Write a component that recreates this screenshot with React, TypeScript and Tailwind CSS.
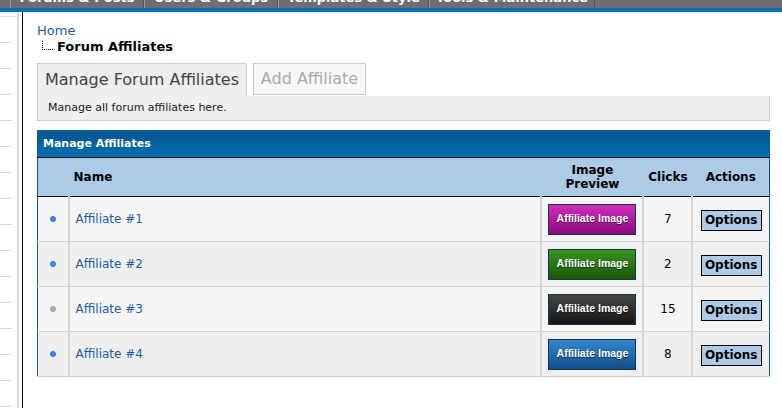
import React from "react";

const tabs = ["Forums & Posts", "Users & Groups", "Templates & Style", "Tools & Maintenance"];
const tabWidths = ["w-[134px]", "w-[134px]", "w-[151px]", "w-[166px]"];

const affiliates = [
  { name: "Affiliate #1", clicks: 7, active: true, img: "bg-gradient-to-b from-[#d22bbd] to-[#8c0a7e]", bg: "bg-[#f5f5f5]" },
  { name: "Affiliate #2", clicks: 2, active: true, img: "bg-gradient-to-b from-[#3a9420] to-[#1a5608]", bg: "bg-[#efefef]" },
  { name: "Affiliate #3", clicks: 15, active: false, img: "bg-gradient-to-b from-[#454845] to-[#161816]", bg: "bg-[#f5f5f5]" },
  { name: "Affiliate #4", clicks: 8, active: true, img: "bg-gradient-to-b from-[#3488d0] to-[#0f4f8a]", bg: "bg-[#efefef]" },
];

const App = () => {
  return (
    <div className="w-[782px] h-[408px] overflow-hidden bg-white font-[Verdana,'DejaVu_Sans',sans-serif] text-black">
      {/* top menu, only its lower edge is in view */}
      <div className="h-[8px] overflow-hidden bg-[#6e6e6e] flex pl-[10px]">
        {tabs.map((t, i) => (
          <div
            key={t}
            className={`${tabWidths[i]} h-[8px] border-l border-[#9a9a9a] border-r border-r-[#555] flex justify-center`}
          >
            <span className="-mt-[10px] text-[13px] leading-[16px] font-bold text-white whitespace-nowrap">{t}</span>
          </div>
        ))}
      </div>
      <div className="h-[4px] bg-[#0072b5]" />

      <div className="flex h-[396px]">
        {/* sidebar */}
        <div className="w-[19px] flex">
          <div className="w-[17px] mt-[4px] border-t border-[#dcdcdc] flex flex-col">
            {Array.from({ length: 15 }).map((_, i) => (
              <div key={i} className="h-[26px] w-[12px] border-b border-[#d9d9d9] shrink-0" />
            ))}
          </div>
          <div className="w-[2px] bg-[#d8d8d8]" />
        </div>
        <div className="w-[3px]" />
        <div className="w-px bg-black" />

        {/* content */}
        <div className="flex-1 pl-[14px] pr-[12px] pt-[11px]">
          <a className="block text-[13px] leading-[16px] text-[#245d9e]">Home</a>
          <div className="flex items-end">
            <div className="ml-[5px] w-[11px] h-[9px] mb-[5px] border-l border-b border-dotted border-black" />
            <span className="ml-[4px] text-[13px] leading-[16px] font-bold">Forum Affiliates</span>
          </div>

          <div className="flex gap-[6px] mt-[8px]">
            <div className="w-[210px] h-[33px] bg-[#eeeeee] border border-[#cccccc] border-b-0 flex items-center justify-center text-[16px] text-[#444]">
              Manage Forum Affiliates
            </div>
            <div className="w-[113px] h-[32px] bg-[#f7f7f7] border border-[#cccccc] flex items-center justify-center text-[16px] text-[#aaaaaa]">
              Add Affiliate
            </div>
          </div>
          <div className="h-[25px] bg-[#efefef] border border-[#cccccc] border-t-0 flex items-center pl-[10px] text-[11px] text-[#222]">
            Manage all forum affiliates here.
          </div>

          <table className="mt-[9px] w-[733px] border-collapse border border-[#0f5a8d] table-fixed">
            <colgroup>
              <col className="w-[31px]" />
              <col />
              <col className="w-[102px]" />
              <col className="w-[49px]" />
              <col className="w-[77px]" />
            </colgroup>
            <thead>
              <tr>
                <th
                  colSpan={5}
                  className="h-[27px] bg-gradient-to-b from-[#02558f] to-[#0370b3] text-left pl-[5px] text-[11px] font-bold text-white border-b border-[#111]"
                >
                  Manage Affiliates
                </th>
              </tr>
              <tr className="bg-[#adcbe7] text-[12px] font-bold leading-[14px] border-b border-black">
                <th className="h-[39px]" />
                <th className="text-left pl-[5px]">Name</th>
                <th className="text-center">
                  Image
                  <br />
                  Preview
                </th>
                <th className="text-center">Clicks</th>
                <th className="text-center">Actions</th>
              </tr>
            </thead>
            <tbody>
              {affiliates.map((a) => (
                <tr key={a.name} className={`${a.bg} border-b border-[#cfcfcf]`}>
                  <td className="h-[45px] border-r-2 border-[#d6d6d6]">
                    <div className="flex justify-center">
                      <span
                        className={`w-[6px] h-[6px] rounded-full ${
                          a.active ? "bg-[#3b8de0] border border-[#2a74c2]" : "bg-[#b0b0b0] border border-[#999]"
                        }`}
                      />
                    </div>
                  </td>
                  <td className="pl-[6px] text-[12px] text-[#245d9e] border-r-2 border-[#d6d6d6]">{a.name}</td>
                  <td className="border-r-2 border-[#d6d6d6]">
                    <div
                      className={`mx-auto w-[88px] h-[31px] border border-[#0e3752] ${a.img} flex items-center justify-center font-['Liberation_Sans',Arial,sans-serif] text-[10.5px] font-bold text-white [text-shadow:0_1px_1px_rgba(0,0,0,0.6)]`}
                    >
                      Affiliate Image
                    </div>
                  </td>
                  <td className="text-center text-[12px] border-r-2 border-[#d6d6d6]">{a.clicks}</td>
                  <td className="text-center">
                    <span className="inline-block px-[3px] h-[21px] leading-[18px] bg-[#adcbe7] border-[1.5px] border-black text-[12px] font-bold">
                      Options
                    </span>
                  </td>
                </tr>
              ))}
            </tbody>
          </table>
        </div>
      </div>
    </div>
  );
};

export default App;
